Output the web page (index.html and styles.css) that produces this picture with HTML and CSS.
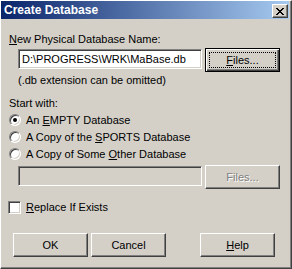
FILE: index.html
```html
<!DOCTYPE html>
<html lang="en">
<head>
    <meta charset="UTF-8">
    <meta name="viewport" content="width=device-width, initial-scale=1.0">
    <title>Create Database</title>
    <link rel="stylesheet" href="styles.css">
</head>
<body>
    <div class="window">
        <div class="titlebar">
            <span class="title">Create Database</span>
            <span class="close-btn">
                <svg width="8" height="7" viewBox="0 0 8 7" shape-rendering="crispEdges">
                    <path fill="#000" d="M0 0h2v1H0z M6 0h2v1H6z M1 1h2v1H1z M5 1h2v1H5z M2 2h4v1H2z M3 3h2v1H3z M2 4h4v1H2z M1 5h2v1H1z M5 5h2v1H5z M0 6h2v1H0z M6 6h2v1H6z"/>
                </svg>
            </span>
        </div>
        <div class="dialog-body">
            <div class="label"><u>N</u>ew Physical Database Name:</div>
            <div class="field-row">
                <div class="textbox">D:\PROGRESS\WRK\MaBase.db</div>
                <div class="btn btn-default"><span class="focus"><span><u>F</u>iles...</span></span></div>
            </div>
            <div class="note">(.db extension can be omitted)</div>

            <div class="label start-label">Start with:</div>
            <div class="option first"><span class="radio checked"></span><span>An <u>E</u>MPTY Database</span></div>
            <div class="option"><span class="radio"></span><span>A Copy of the <u>S</u>PORTS Database</span></div>
            <div class="option"><span class="radio"></span><span>A Copy of Some <u>O</u>ther Database</span></div>
            <div class="field-row other-row">
                <div class="textbox disabled"></div>
                <div class="btn disabled">Files...</div>
            </div>

            <div class="check-row"><span class="checkbox"></span><span><u>R</u>eplace If Exists</span></div>

            <div class="button-row">
                <div class="btn">OK</div>
                <div class="btn">Cancel</div>
                <div class="btn help-btn"><span><u>H</u>elp</span></div>
            </div>
        </div>
    </div>
</body>
</html>
```

FILE: styles.css
```css
body {
    margin: 0;
    padding: 0;
    font-family: "Liberation Sans", Arial, sans-serif;
    font-size: 11px;
    line-height: 13px;
    color: #000;
    background-color: #d4d0c8;
}
u {
    text-decoration: underline;
    text-underline-offset: 1px;
}
.window {
    width: 292px;
    height: 269px;
    box-sizing: border-box;
    background-color: #d4d0c8;
    border: 1px solid;
    border-color: #fff #404040 #404040 #fff;
    box-shadow: inset -1px -1px #808080;
    padding: 0 2px 0 0;
}
.titlebar {
    height: 18px;
    display: flex;
    align-items: flex-start;
    justify-content: space-between;
    background: linear-gradient(to right, #0a246a, #a6caf0);
}
.title {
    color: #fff;
    font-weight: bold;
    font-size: 12px;
    line-height: 18px;
    padding-left: 3px;
}
.close-btn {
    width: 16px;
    height: 14px;
    box-sizing: border-box;
    margin-top: 3px;
    margin-right: 1px;
    display: flex;
    align-items: center;
    justify-content: center;
    background-color: #d4d0c8;
    border: 1px solid;
    border-color: #fff #404040 #404040 #fff;
    box-shadow: inset -1px -1px #808080;
}
.dialog-body {
    padding: 14px 0 0 8px;
    display: flex;
    flex-direction: column;
    align-items: flex-start;
}
.field-row {
    display: flex;
    align-items: flex-start;
    margin-top: 2px;
    margin-left: 9px;
    gap: 3px;
}
.textbox {
    width: 184px;
    height: 20px;
    box-sizing: border-box;
    margin-top: 1px;
    padding: 2px 0 0 3px;
    background-color: #fff;
    border: 1px solid;
    border-color: #808080 #fff #fff #808080;
    box-shadow: inset 1px 1px #404040, inset -1px -1px #d4d0c8;
    white-space: nowrap;
    line-height: 14px;
}
.textbox.disabled {
    background-color: #d4d0c8;
}
.btn {
    width: 75px;
    height: 24px;
    box-sizing: border-box;
    display: flex;
    align-items: center;
    justify-content: center;
    background-color: #d4d0c8;
    border: 1px solid;
    border-color: #fff #404040 #404040 #fff;
    box-shadow: inset -1px -1px #808080;
}
.btn-default {
    border-color: #000;
    box-shadow: inset 1px 1px #fff, inset -1px -1px #404040, inset -2px -2px #808080;
}
.focus {
    width: 65px;
    height: 14px;
    display: flex;
    align-items: center;
    justify-content: center;
    outline: 1px dotted #000;
}
.btn.disabled {
    color: #808080;
    text-shadow: 1px 1px #fff;
}
.note {
    margin-top: 2px;
    margin-left: 9px;
}
.start-label {
    margin-top: 10px;
}
.option {
    display: flex;
    align-items: flex-start;
    height: 17px;
}
.option.first {
    margin-top: 4px;
}
.radio {
    width: 12px;
    height: 12px;
    box-sizing: border-box;
    margin-right: 5px;
    border-radius: 50%;
    background-color: #fff;
    border: 1px solid;
    border-color: #808080 #fff #fff #808080;
    box-shadow: inset 1px 1px #404040, inset -1px -1px #d4d0c8;
    position: relative;
}
.radio.checked::after {
    content: "";
    position: absolute;
    left: 3px;
    top: 3px;
    width: 4px;
    height: 4px;
    border-radius: 50%;
    background-color: #000;
}
.other-row {
    margin-top: 0;
}
.check-row {
    display: flex;
    align-items: center;
    margin-top: 12px;
    margin-left: -1px;
}
.checkbox {
    width: 13px;
    height: 13px;
    box-sizing: border-box;
    margin-right: 5px;
    background-color: #fff;
    border: 1px solid;
    border-color: #808080 #fff #fff #808080;
    box-shadow: inset 1px 1px #404040, inset -1px -1px #d4d0c8;
}
.button-row {
    display: flex;
    gap: 3px;
    margin-top: 19px;
    margin-left: 4px;
}
.help-btn {
    margin-left: 31px;
}
```
